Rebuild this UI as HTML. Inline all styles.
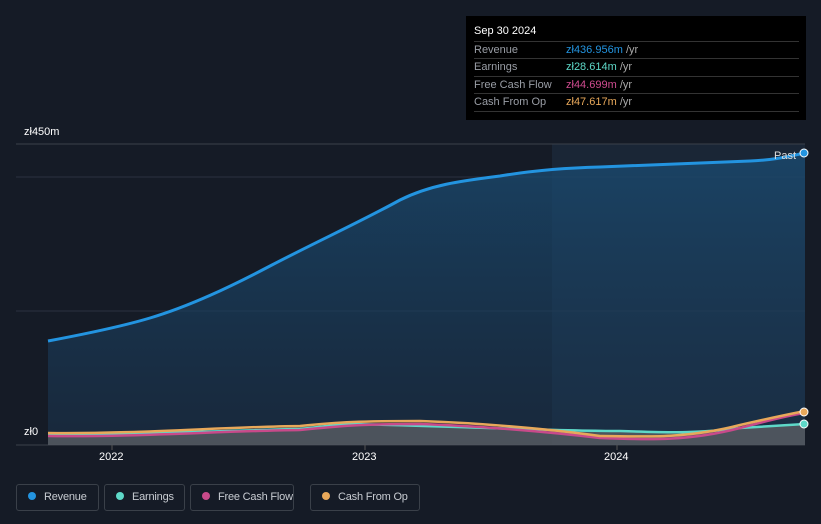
<!DOCTYPE html>
<html><head><style>
body{margin:0;width:821px;height:524px;background:#151b26;font-family:"Liberation Sans",sans-serif;overflow:hidden;position:relative}
.tip{position:absolute;left:466px;top:16px;width:340px;height:104px;background:#000;color:#fff;font-size:11px}
.tip .h{position:absolute;left:8px;top:9px;font-size:11px}
.row{position:absolute;left:8px;width:325px;height:17px;border-top:1px solid #333;line-height:17px;white-space:nowrap}
.row .l{color:#9a9ea6;display:inline-block;width:92px}
.row .u{color:#aaa}
.leg{position:absolute;top:484px;height:27px;border:1px solid #3a4049;border-radius:3px;color:#c8ccd2;font-size:11px;line-height:25px;box-sizing:border-box;white-space:nowrap;letter-spacing:-0.2px}
.leg i{display:inline-block;width:8px;height:8px;border-radius:50%;margin:0 8px 0 11px;vertical-align:0px}
.ax{position:absolute;color:#fff;font-size:11px}
</style></head><body>
<svg width="821" height="524" style="position:absolute;left:0;top:0">
<defs><linearGradient id="g" x1="0" y1="0" x2="0" y2="1"><stop offset="0" stop-color="#1a4a70" stop-opacity=".8"/><stop offset="1" stop-color="#1a3550" stop-opacity=".5"/></linearGradient></defs>
<rect x="552" y="144" width="253" height="301" fill="#1a2636"/>
<line x1="16" y1="144" x2="805" y2="144" stroke="#3a404a"/>
<line x1="16" y1="177" x2="805" y2="177" stroke="#2a3240"/>
<line x1="16" y1="311" x2="805" y2="311" stroke="#2a3240"/>
<line x1="16" y1="445" x2="805" y2="445" stroke="#3a404a"/>
<path d="M48,341 C80,335 120,327 150,318 C190,306 230,287 270,266 C320,240 360,222 400,200 C430,185 460,181 500,176 C530,171 560,168 600,167 C650,165 700,163 750,161 C775,160 790,156 805,153 L805,445 L48,445Z" fill="url(#g)"/>
<path d="M48,435 C150,434 250,430 350,424 C450,426 550,431 620,431 C680,433 740,428 805,424 L805,445 L48,445Z" fill="#5a5e64" opacity=".8"/>
<path d="M48,341 C80,335 120,327 150,318 C190,306 230,287 270,266 C320,240 360,222 400,200 C430,185 460,181 500,176 C530,171 560,168 600,167 C650,165 700,163 750,161 C775,160 790,156 805,153" fill="none" stroke="#2394e0" stroke-width="3"/>
<path d="M48,435 C150,434 250,430 300,429 C330,426 340,424 350,424 C450,426 550,431 620,431 C680,433 700,433 740,428 C770,426 790,425 805,424" fill="none" stroke="#5ed8c8" stroke-width="2.5"/>
<path d="M48,436 C140,437 220,431 300,430 C340,426 360,424 420,424 C480,426 550,432 600,438 C650,440 690,441 740,428 C770,420 790,415 805,413" fill="none" stroke="#c84a8a" stroke-width="2.5"/>
<path d="M48,433 C140,434 220,427 300,426 C340,422 360,421 420,421 C480,423 550,429 600,436 C650,437 690,438 740,425 C770,418 790,414 805,411" fill="none" stroke="#e8a85a" stroke-width="2.5"/>
<circle cx="804" cy="153" r="4" fill="#2394e0" stroke="#fff" stroke-width="1"/>
<circle cx="804" cy="412" r="4" fill="#e8a85a" stroke="#fff" stroke-width="1"/>
<circle cx="804" cy="424" r="4" fill="#5ed8c8" stroke="#fff" stroke-width="1"/>
<line x1="112" y1="445" x2="112" y2="450" stroke="#555"/><line x1="365" y1="445" x2="365" y2="450" stroke="#555"/><line x1="617" y1="445" x2="617" y2="450" stroke="#555"/>
</svg>
<div class="ax" style="left:24px;top:126px">zł450m</div>
<div class="ax" style="left:24px;top:426px">zł0</div>
<div class="ax" style="left:774px;top:150px;color:#ddd">Past</div>
<div class="ax" style="left:99px;top:451px">2022</div>
<div class="ax" style="left:352px;top:451px">2023</div>
<div class="ax" style="left:604px;top:451px">2024</div>
<div class="tip"><div class="h">Sep 30 2024</div>
<div class="row" style="top:25px"><span class="l">Revenue</span><span style="color:#2394e0">zł436.956m</span> <span class="u">/yr</span></div>
<div class="row" style="top:42px"><span class="l">Earnings</span><span style="color:#5ed8c8">zł28.614m</span> <span class="u">/yr</span></div>
<div class="row" style="top:60px"><span class="l">Free Cash Flow</span><span style="color:#d04c90">zł44.699m</span> <span class="u">/yr</span></div>
<div class="row" style="top:77px;border-bottom:1px solid #333"><span class="l">Cash From Op</span><span style="color:#e8a85a">zł47.617m</span> <span class="u">/yr</span></div>
</div>
<div class="leg" style="left:16px;width:83px"><i style="background:#2394e0"></i>Revenue</div>
<div class="leg" style="left:104px;width:81px"><i style="background:#5ed8c8"></i>Earnings</div>
<div class="leg" style="left:190px;width:104px"><i style="background:#c84a8a"></i>Free Cash Flow</div>
<div class="leg" style="left:310px;width:110px"><i style="background:#e8a85a"></i>Cash From Op</div>
</body></html>
